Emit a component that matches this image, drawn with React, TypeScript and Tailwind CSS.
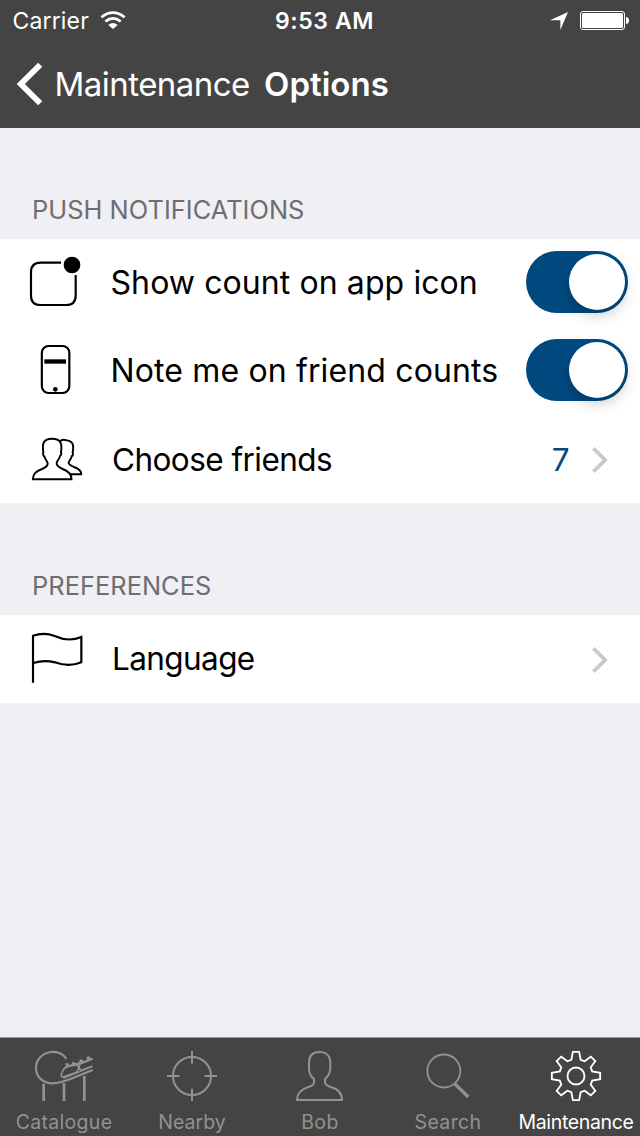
import type { ReactNode } from "react";

function StatusBar() {
  return (
    <div className="grid h-10 grid-cols-[1fr_auto_1fr] items-center text-[23px]">
      <div className="flex items-center pl-[12.5px]">
        <span className="pt-[2px] leading-[38px] tracking-[0.15px]">Carrier</span>
        <svg className="ml-[11px] h-[18px] w-[26px]" viewBox="0 0 78 54" fill="none" stroke="white" strokeWidth="8">
          <path d="M4 19 Q39 -9 74 19" />
          <path d="M16 31.500 Q39 13 62 31.500" />
          <path d="M25 42 Q39 30 53 42 L39 54Z" fill="white" stroke="none" />
        </svg>
      </div>
      <span className="pl-[9px] pt-[2px] font-semibold leading-[38px] tracking-[0.6px]">9:53 AM</span>
      <div className="flex items-center justify-end pr-[11px]">
        <svg className="mr-3 mt-[2px] h-[18px] w-[18px]" viewBox="0 0 54 54" fill="white">
          <path d="M54 0 L31 54 V25 H0Z" />
        </svg>
        <svg className="mt-[1px] h-[19px] w-[49px]" viewBox="0 0 49 19" fill="white">
          <rect x="0.5" y="0.5" width="44" height="18" rx="2.5" fill="none" stroke="white" />
          <rect x="2" y="2" width="41" height="15" rx="1.5" />
          <path d="M46 6 C50 6 50 13 46 13Z" />
        </svg>
      </div>
    </div>
  );
}

function NavBar() {
  return (
    <div className="flex h-[88px] items-center text-[33px] leading-[88px]">
      <svg className="ml-4 h-[44px] w-[28px]" viewBox="0 0 28 44" fill="none" stroke="white" strokeWidth="5.8">
        <path d="M24.2 2.8 L4.800 22 L24.2 41.2" />
      </svg>
      <span className="ml-[10.5px] w-[196px] tracking-[-0.53px]">Maintenance</span>
      <span className="ml-[13.5px] font-semibold tracking-[0.03px]">Options</span>
    </div>
  );
}

function SectionTitle({ children }: { children: ReactNode }) {
  return (
    <h2 className="flex items-end pb-[14px] pl-8 text-[25.4px] leading-[30px] tracking-[0.04px] text-[#6d6d72]">
      {children}
    </h2>
  );
}

function Switch() {
  return (
    <span className="mb-[2px] mr-3 flex h-[62px] w-[102px] items-center justify-end rounded-full bg-[#004a80] pr-[3px]">
      <span className="h-14 w-14 rounded-full bg-white shadow-[0_6px_14px_rgba(0,0,0,0.2)]" />
    </span>
  );
}

function Chevron() {
  return (
    <svg className="mr-[30px] h-7 w-5" viewBox="0 0 20 28" fill="none" stroke="#c7c7cc" strokeWidth="3.7">
      <path d="M3.4 2.4 L15.2 14 L3.4 25.6" />
    </svg>
  );
}

function BadgeIcon() {
  return (
    <svg className="ml-5 h-[88px] w-20 shrink-0" viewBox="0 -18 240 264" fill="none" stroke="black" strokeWidth="6.5">
      <path d="M123 53 H62 Q33 53 33 82 V152 Q33 180 62 180 H138 Q167 180 167 152 V90" />
      <circle cx="156" cy="60" r="25" fill="black" stroke="none" />
    </svg>
  );
}

function PhoneIcon() {
  return (
    <svg className="ml-5 h-[88px] w-20 shrink-0" viewBox="0 -24 240 264" fill="none" stroke="black" strokeWidth="6.5">
      <rect x="65.5" y="33" width="82.5" height="141" rx="20" />
      <path d="M73 79.5 H138" strokeWidth="13" />
      <circle cx="106" cy="163" r="7" fill="black" stroke="none" />
    </svg>
  );
}

function FriendsIcon() {
  return (
    <svg className="ml-5 h-[88px] w-20 shrink-0" viewBox="0 -30 240 264" fill="none" stroke="black" strokeWidth="5.8">
      <path d="M38.500 162.500 H154.500 C154.500 145 144 138 128 132 C116 127 109 121 110 113 C112 105 119 102 120 93 C124 90 125 84 123 82 C127 56 123 41 96 41 C70 41 66 56 70 82 C68 88 70 93 73 94 C75 103 81 107 83 114 C84 122 76 128 66 132 C48 138 38.500 147 38.500 162.500Z" />
      <path d="M118 51 C122 44 132 43 141 46 C160 49 162 62 158 82 C160 87 158 92 155 94 C154 102 147 107 146 113 C146 119 153 122 162 126 C177 131 184 137 183.500 147.500 H150" />
    </svg>
  );
}

function FlagIcon() {
  return (
    <svg className="ml-5 h-[88px] w-20 shrink-0" viewBox="0 -15 240 264" fill="none" stroke="black" strokeWidth="6.5">
      <path d="M39 188 V47 C60 40 84 40 104 48 C130 60 153 64 184 51 V127 C158 138 132 137 105 127 C82 121 61 122 40 129" />
    </svg>
  );
}

type RowProps = { icon: ReactNode; label: string; labelClass: string; children: ReactNode };

function Row({ icon, label, labelClass, children }: RowProps) {
  return (
    <div className="flex h-[88px]">
      {icon}
      <div className={`flex flex-1 items-center whitespace-nowrap leading-none ${labelClass}`}>
        <span className="flex-1">{label}</span>
        {children}
      </div>
    </div>
  );
}

function CatalogueIcon() {
  return (
    <svg className="h-[68px] w-32 shrink-0" viewBox="0 24 384 204" fill="none" stroke="currentColor" strokeWidth="6.5">
      <path d="M199 87 C188 69 172 65 155 66 C128 68 108 88 108 113 C108 142 130 160 158 160 C183 160 204 150 224 142 L278 120" />
      <path d="M190 145 L278 109" strokeWidth="4" />
      <path d="M188 141 Q179 141 188 123 Q193 112 204 109 L231 101 Q236 120 246 120 L276 109 M237 101 L278 86 M240 103 Q237 119 228 128 L188 141" strokeWidth="5" />
      <path d="M197 113 V106 Q194 98 202 99 Q209 101 209 106 L216 103 Q213 94 221 96 Q228 98 227 104 L231 101 L238 95 Q237 88 244 88 Q250 89 251 94 L261 90 Q257 79 265 79 Q272 80 272 87 L278 83 V89 L240 105Z" fill="currentColor" stroke="none" />
      <path d="M131 161 V213 M192 159 V213 M253 138 V213" strokeWidth="8" />
    </svg>
  );
}

function NearbyIcon() {
  return (
    <svg className="h-[68px] w-32 shrink-0" viewBox="-6 24 384 204" fill="none" stroke="currentColor" strokeWidth="6">
      <circle cx="186" cy="138" r="57" />
      <path d="M186 63 V101 M186 176 V213 M111 138 H149 M223 138 H261" />
    </svg>
  );
}

function PersonIcon() {
  return (
    <svg className="h-[68px] w-32 shrink-0" viewBox="-12 24 384 204" fill="none" stroke="currentColor" strokeWidth="6">
      <path d="M111 210 H246 C246 185 231 176 212 171 C202 168 196 163 195 158 V147 C205 139 210 129 211 116 V98 C211 78 199 66 179 66 C158 66 147 78 147 98 V116 C147 130 152 139 162 147 V158 C162 163 155 168 145 171 C126 177 111 187 111 210Z" />
    </svg>
  );
}

function SearchIcon() {
  return (
    <svg className="h-[68px] w-32 shrink-0" viewBox="372 24 384 204" fill="none" stroke="currentColor" strokeWidth="5.500">
      <circle cx="551.500" cy="123" r="49.500" />
      <path d="M583 160 L625 201" strokeWidth="10" />
    </svg>
  );
}

function GearIcon() {
  return (
    <svg className="h-[68px] w-32 shrink-0" viewBox="6 24 384 204" fill="none" stroke="currentColor" strokeWidth="5.500">
      <circle cx="198" cy="138" r="25.500" />
      <path
        transform="translate(198 138)"
        d="M-9.500 -72.500 L9.500 -72.500 L14 -48.500 L26 -44 L44.500 -58 L58 -44.500 L44 -26 L48.500 -14 L72.500 -9.500 V9.500 L48.500 14 L44 26 L58 44.500 L44.500 58 L26 44 L14 48.500 L9.500 72.500 H-9.500 L-14 48.500 L-26 44 L-44.500 58 L-58 44.500 L-44 26 L-48.500 14 L-72.500 9.500 V-9.500 L-48.500 -14 L-44 -26 L-58 -44.500 L-44.500 -58 L-26 -44 L-14 -48.500Z"
      />
    </svg>
  );
}

function Tab({ icon, label, className }: { icon: ReactNode; label: string; className: string }) {
  return (
    <div className={`flex w-32 flex-col items-center text-[19.5px] leading-8 ${className}`}>
      {icon}
      <span>{label}</span>
    </div>
  );
}

export default function App() {
  return (
    <div className="flex h-[1136px] w-[640px] flex-col overflow-hidden bg-[#efeff4] font-['Inter',sans-serif] text-black">
      <header className="h-32 bg-[#444444] text-white">
        <StatusBar />
        <NavBar />
      </header>

      <main className="flex-1">
        <section>
          <div className="flex h-[111px] flex-col justify-end">
            <SectionTitle>PUSH NOTIFICATIONS</SectionTitle>
          </div>
          <div className="bg-white">
            <Row icon={<BadgeIcon />} label="Show count on app icon" labelClass="pl-[10.5px] text-[32px] tracking-[0.09px]">
              <Switch />
            </Row>
            <Row icon={<PhoneIcon />} label="Note me on friend counts" labelClass="pl-[10.5px] text-[32px] tracking-[0.14px]">
              <Switch />
            </Row>
            <Row icon={<FriendsIcon />} label="Choose friends" labelClass="pl-3 pt-[2px] text-[31.5px] tracking-[-0.55px]">
              <span className="mr-[21px] text-[#004a80]">7</span>
              <Chevron />
            </Row>
          </div>
        </section>

        <section>
          <div className="flex h-28 flex-col justify-end">
            <SectionTitle>PREFERENCES</SectionTitle>
          </div>
          <div className="bg-white">
            <Row icon={<FlagIcon />} label="Language" labelClass="pl-3 text-[31.5px] tracking-[-0.6px]">
              <span className="mt-[2px]">
                <Chevron />
              </span>
            </Row>
          </div>
        </section>
      </main>

      <nav className="flex h-[99px] border-t border-[#98989c] bg-[#444444]">
        <Tab icon={<CatalogueIcon />} label="Catalogue" className="text-[#929292] tracking-[0.31px]" />
        <Tab icon={<NearbyIcon />} label="Nearby" className="text-[#929292]" />
        <Tab icon={<PersonIcon />} label="Bob" className="text-[#929292] tracking-[0.4px]" />
        <Tab icon={<SearchIcon />} label="Search" className="text-[#929292] tracking-[0.36px]" />
        <Tab icon={<GearIcon />} label="Maintenance" className="text-white tracking-[-0.35px]" />
      </nav>
    </div>
  );
}
